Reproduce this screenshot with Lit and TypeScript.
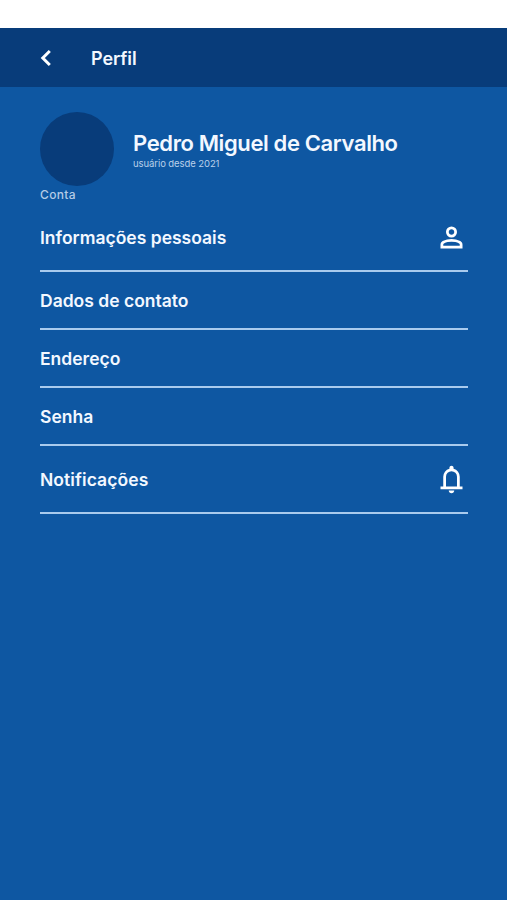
import { LitElement, html, css, nothing } from "lit";
import { customElement } from "lit/decorators.js";

type Icon = "person" | "bell";

const ICONS: Record<Icon, string> = {
  person:
    "M480-480q-66 0-113-47t-47-113q0-66 47-113t113-47q66 0 113 47t47 113q0 66-47 113t-113 47ZM160-160v-112q0-34 17.5-62.5T224-378q62-31 126-46.5T480-440q66 0 130 15.5T736-378q29 15 46.5 43.5T800-272v112H160Zm80-80h480v-32q0-11-5.5-20T700-306q-54-27-109-40.5T480-360q-56 0-111 13.5T260-306q-9 5-14.5 14t-5.5 20v32Zm240-320q33 0 56.5-23.5T560-640q0-33-23.5-56.5T480-720q-33 0-56.5 23.5T400-640q0 33 23.5 56.5T480-560Z",
  bell: "M160-200v-80h80v-280q0-83 50-147.5T420-792v-28q0-25 17.5-42.5T480-880q25 0 42.5 17.5T540-820v28q80 20 130 84.5T720-560v280h80v80H160Zm320 120q-33 0-56.5-23.5T400-160h160q0 33-23.5 56.5T480-80ZM320-280h320v-280q0-66-47-113t-113-47q-66 0-113 47t-47 113v280Z",
};

const ROWS: { label: string; key: string; icon?: Icon }[] = [
  { label: "Informações pessoais", key: "info", icon: "person" },
  { label: "Dados de contato", key: "contact" },
  { label: "Endereço", key: "address" },
  { label: "Senha", key: "password" },
  { label: "Notificações", key: "notify", icon: "bell" },
];

@customElement("app-root")
export class AppRoot extends LitElement {
  static styles = css`
    :host {
      display: flex;
      flex-direction: column;
      box-sizing: border-box;
      height: 900px;
      padding-top: 28px;
      background: #fff;
      color: #f3f8ff;
      font-family: Inter, "Liberation Sans", sans-serif;
      font-weight: 600;
    }
    .bar {
      display: flex;
      align-items: center;
      flex: none;
      height: 59px;
      padding-left: 40px;
      background: #083c7a;
    }
    .back {
      display: block;
      width: 12px;
      height: 18px;
      margin-right: 39px;
      margin-top: 1px;
    }
    .title {
      font-size: 18px;
      line-height: 24px;
      letter-spacing: -0.1px;
      margin-top: 3px;
    }
    .body {
      flex: 1;
      padding: 25px 39px 0 40px;
      background: #0e57a2;
    }
    .user {
      display: flex;
      align-items: center;
    }
    .avatar {
      width: 74px;
      height: 74px;
      margin-right: 19px;
      border-radius: 50%;
      background: #083c7a;
    }
    .name {
      font-size: 22px;
      line-height: 28px;
      letter-spacing: -0.38px;
      white-space: nowrap;
    }
    .since {
      font-size: 9.5px;
      line-height: 12px;
      letter-spacing: -0.08px;
      font-weight: 400;
      color: #b9d0ea;
      padding-top: 1px;
    }
    .section {
      font-size: 12px;
      line-height: 16px;
      letter-spacing: 0.35px;
      font-weight: 500;
      color: #b4cbe6;
      margin-top: 1px;
    }
    .row {
      display: flex;
      align-items: center;
      justify-content: space-between;
      box-sizing: border-box;
      height: 58px;
      border-bottom: 2px solid #a9cbee;
      font-size: 17.5px;
    }
    .info {
      height: 69px;
      padding-top: 2px;
    }
    .notify {
      height: 68px;
      padding-top: 1px;
      letter-spacing: 0.08px;
    }
    .icon {
      width: 33px;
      height: 33px;
      fill: #fff;
    }
  `;

  render() {
    return html`
      <header class="bar">
        <svg class="back" viewBox="0 0 12 18">
          <path d="M9.8 2 L2.8 9 L9.8 16" fill="none" stroke="#fff" stroke-width="3" />
        </svg>
        <span class="title">Perfil</span>
      </header>
      <main class="body">
        <section class="user">
          <div class="avatar"></div>
          <div>
            <div class="name">Pedro Miguel de Carvalho</div>
            <div class="since">usuário desde 2021</div>
          </div>
        </section>
        <div class="section">Conta</div>
        <nav>
          ${ROWS.map(
            (r) => html`<div class="row ${r.key}">
              <span>${r.label}</span>
              ${r.icon
                ? html`<svg class="icon" viewBox="0 -960 960 960"><path d=${ICONS[r.icon]} /></svg>`
                : nothing}
            </div>`
          )}
        </nav>
      </main>
    `;
  }
}
